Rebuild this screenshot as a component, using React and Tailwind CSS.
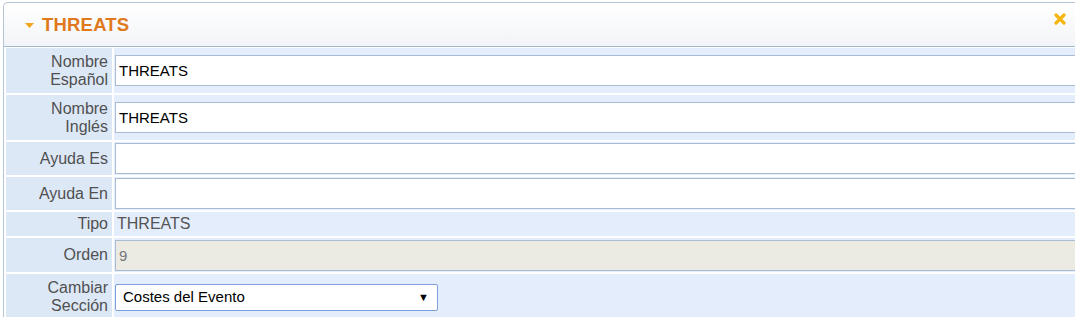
import { useState } from 'react';

const labelCls =
  'flex items-center justify-end text-right pr-[4px] text-[16px] leading-[18px] text-[#505050] bg-[#dde8f7]';
const valueCls = 'flex items-center pl-[1px] bg-[#e3edfc]';
const inputCls =
  'w-full h-[31px] border border-[#a9bcd1] bg-white px-[3px] text-[15px] text-black outline-none';

const Row = ({ label, height, children }) => (
  <div className={`grid grid-cols-[106px_1fr] gap-[2px] ${height}`}>
    <div className={labelCls}>{label}</div>
    <div className={valueCls}>{children}</div>
  </div>
);

export default function App() {
  const [nombreEs, setNombreEs] = useState('THREATS');
  const [nombreEn, setNombreEn] = useState('THREATS');
  const [seccion, setSeccion] = useState('Costes del Evento');

  return (
    <div className="h-[317px] w-[1075px] overflow-hidden bg-white pt-[2px] pl-[3px] font-['Liberation_Sans',Arial,sans-serif]">
      <div className="w-[1100px] border-l border-t border-[#b3c4d4] rounded-tl-[5px] bg-white">
        {/* Header */}
        <div className="flex h-[44px] items-center border-b border-[#9fb8cc] bg-gradient-to-b from-white to-[#f2f4f7] pl-[21px] rounded-tl-[5px]">
          <svg width="9" height="5" viewBox="0 0 9 5" className="mr-[8px] mt-[1px]">
            <path d="M0 0 H9 L4.5 5 Z" fill="#f0a51c" />
          </svg>
          <h1 className="text-[18.5px] font-bold text-[#e0781c] tracking-[0.2px]">THREATS</h1>
          <svg
            width="12"
            height="12"
            viewBox="0 0 12 12"
            className="ml-[925px] -mt-[11px]"
          >
            <path d="M2 2 L10 10 M10 2 L2 10" stroke="#f5b50f" strokeWidth="3.2" strokeLinecap="round" />
          </svg>
        </div>

        {/* Form rows */}
        <div className="flex flex-col gap-[2px] bg-white pt-[1px] pl-[2px]">
          <Row label={<span>Nombre<br />Español</span>} height="h-[45px]">
            <input className={inputCls} value={nombreEs} onChange={(e) => setNombreEs(e.target.value)} />
          </Row>
          <Row label={<span>Nombre<br />Inglés</span>} height="h-[45px]">
            <input className={inputCls} value={nombreEn} onChange={(e) => setNombreEn(e.target.value)} />
          </Row>
          <Row label="Ayuda Es" height="h-[33px]">
            <input className={inputCls} defaultValue="" />
          </Row>
          <Row label="Ayuda En" height="h-[33px]">
            <input className={inputCls} defaultValue="" />
          </Row>
          <Row label="Tipo" height="h-[24px]">
            <span className="pl-[2px] text-[16px] text-[#555555]">THREATS</span>
          </Row>
          <Row label="Orden" height="h-[34px]">
            <input className={`${inputCls} !bg-[#ebebe4] !text-[#777777]`} value="9" disabled readOnly />
          </Row>
          <Row label={<span>Cambiar<br />Sección</span>} height="h-[46px]">
            <div className="relative w-[323px]">
              <select
                value={seccion}
                onChange={(e) => setSeccion(e.target.value)}
                className="h-[27px] w-full appearance-none rounded-[2px] border border-[#7c9fd9] bg-white pl-[7px] text-[15px] text-black outline-none"
              >
                <option>Costes del Evento</option>
                <option>Riesgos</option>
                <option>Oportunidades</option>
              </select>
              <span className="pointer-events-none absolute right-[9px] top-[5px] text-[11px] text-black">▼</span>
            </div>
          </Row>
        </div>
      </div>
    </div>
  );
}
